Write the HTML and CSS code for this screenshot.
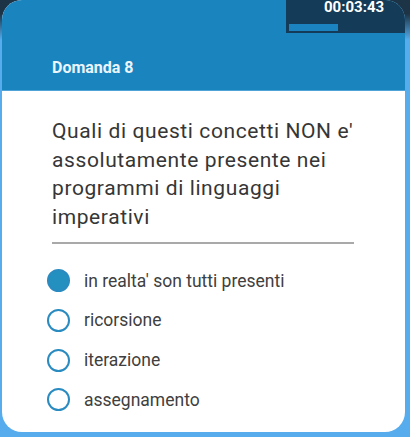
FILE: index.html
```html
<!DOCTYPE html>
<html lang="it">
<head>
<meta charset="utf-8">
<link rel="stylesheet" href="styles.css">
</head>
<body>
<div class="card">
  <div class="header">
    <div class="timer">
      <div class="time">00:03:43</div>
      <div class="bar"><div class="fill" style="width:49px"></div></div>
    </div>
    <div class="title">Domanda 8</div>
  </div>
  <div class="content">
    <div class="question">Quali di questi concetti NON e' assolutamente presente nei programmi di linguaggi imperativi</div>
    <div class="divider"></div>
    <ul class="options">
      <li class="option selected"><span class="radio"></span><span class="label">in realta' son tutti presenti</span></li>
      <li class="option"><span class="radio"></span><span class="label">ricorsione</span></li>
      <li class="option"><span class="radio"></span><span class="label">iterazione</span></li>
      <li class="option"><span class="radio"></span><span class="label">assegnamento</span></li>
    </ul>
  </div>
</div>
</body>
</html>
```
FILE: styles.css
```css
html, body {
  margin: 0;
  padding: 0;
}
body {
  width: 410px;
  height: 437px;
  overflow: hidden;
  font-family: Roboto, "Noto Sans", sans-serif;
  background: linear-gradient(to bottom, #1d3446 0, #1d3446 14px, #56acec 40px, #56acec 100%);
}
.card {
  margin: 0 5px 0 2px;
  height: 432px;
  background: #ffffff;
  border-radius: 20px;
  overflow: hidden;
  display: flex;
  flex-direction: column;
}
.header {
  height: 91px;
  background: #1a84bf;
  display: flex;
  flex-direction: column;
  border-bottom: 1px solid #4fa3d6;
  box-sizing: border-box;
}
.timer {
  align-self: flex-end;
  width: 119px;
  height: 33px;
  background: #143b57;
  box-sizing: border-box;
  padding: 0 0 0 3px;
  display: flex;
  flex-direction: column;
}
.time {
  color: #ffffff;
  font-weight: 700;
  font-size: 15px;
  line-height: 14px;
  padding-left: 35px;
}
.bar {
  margin-top: 10px;
  height: 7px;
}
.fill {
  height: 7px;
  background: #1b84c0;
}
.title {
  margin: 25px 0 0 50px;
  color: #eaf5fc;
  font-weight: 700;
  font-size: 16px;
  line-height: 20px;
}
.content {
  padding: 26px 0 0 50px;
}
.question {
  width: 304px;
  font-size: 21px;
  letter-spacing: 0.6px;
  line-height: 28.5px;
  color: #363636;
}
.divider {
  margin-top: 11px;
  width: 302px;
  height: 2px;
  background: #a9a9a9;
}
.options {
  list-style: none;
  margin: 25px 0 0 -5px;
  padding: 0;
  display: flex;
  flex-direction: column;
  gap: 16.2px;
}
.option {
  display: flex;
  align-items: center;
  height: 23.5px;
}
.radio {
  width: 23px;
  height: 23px;
  box-sizing: border-box;
  border: 2.5px solid #2a8bc0;
  border-radius: 50%;
  flex: none;
}
.selected .radio {
  background: #2490c0;
  border-color: #2a8bc0;
}
.label {
  margin-left: 14px;
  font-size: 17.5px;
  color: #404040;
}
```
